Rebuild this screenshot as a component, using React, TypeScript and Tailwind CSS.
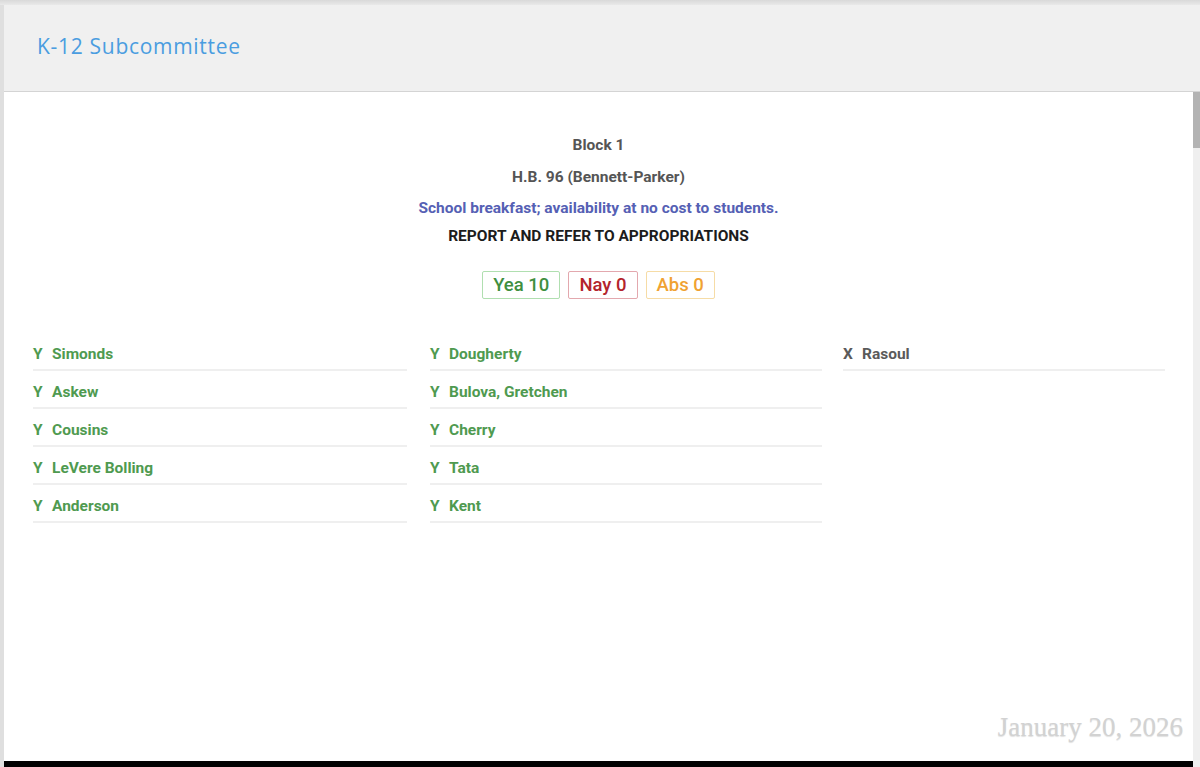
const col1 = ['Simonds', 'Askew', 'Cousins', 'LeVere Bolling', 'Anderson'];
const col2 = ['Dougherty', 'Bulova, Gretchen', 'Cherry', 'Tata', 'Kent'];

type Vote = { mark: string; name: string };

const VoteRow = ({ mark, name }: Vote) => {
	const color = mark === 'Y' ? 'text-[#4f9a50]' : 'text-[#5a5a5a]';
	return (
		<div className="mb-[2px] border-b-2 border-[#efefef] pt-[9px] pb-[5px]">
			<div className={`flex text-[15.5px] font-bold leading-[20px] ${color}`}>
				<span className="w-[19px]">{mark}</span>
				<span>{name}</span>
			</div>
		</div>
	);
};

export default function App() {
	return (
		<div className="flex h-[767px] w-[1200px] flex-col overflow-hidden bg-[#e4e4e4] font-['Roboto',sans-serif]">
			<div className="h-[5px] bg-gradient-to-b from-[#d9d9d9] to-[#e9e9e9]" />
			<div className="flex flex-1">
				<div className="w-[4px] bg-[#dfdfdf]" />
				<div className="flex flex-1 flex-col">
					<header className="flex h-[87px] items-center border-b border-[#d4d4d4] bg-[#f0f0f0] pl-[33px] pb-[2px]">
						<h1 className="font-['Open_Sans',sans-serif] text-[21px] tracking-[0.7px] text-[#4a9de0]">
							K-12 Subcommittee
						</h1>
					</header>
					<div className="flex flex-1">
						<div className="flex flex-1 flex-col bg-white">
							<main className="flex-1 pt-[37px]">
								<div className="flex flex-col items-center text-center">
									<div className="text-[15.5px] font-bold leading-[32px] text-[#555]">Block 1</div>
									<div className="text-[15.5px] font-bold leading-[32px] text-[#555]">
										H.B. 96 (Bennett-Parker)
									</div>
									<div className="text-[15.5px] font-bold leading-[31px] text-[#5560b4]">
										School breakfast; availability at no cost to students.
									</div>
									<div className="text-[15.5px] font-bold leading-[24px] text-[#1c1c1c]">
										REPORT AND REFER TO APPROPRIATIONS
									</div>
									<div className="mt-[23px] flex gap-[8px] text-[18.5px] font-medium leading-[26px]">
										<span className="rounded-[2px] border border-[#b0dfb0] px-[10px] text-[#3f8f40]">
											Yea 10
										</span>
										<span className="rounded-[2px] border border-[#e3a8ae] px-[10px] text-[#b3242c]">
											Nay 0
										</span>
										<span className="rounded-[2px] border border-[#f6dca6] px-[10px] text-[#f0a232]">
											Abs 0
										</span>
									</div>
								</div>
								<div className="mt-[36px] flex pl-[29px]">
									<div className="w-[374px]">
										{col1.map((n) => (
											<VoteRow key={n} mark="Y" name={n} />
										))}
									</div>
									<div className="ml-[23px] w-[392px]">
										{col2.map((n) => (
											<VoteRow key={n} mark="Y" name={n} />
										))}
									</div>
									<div className="ml-[21px] w-[322px]">
										<VoteRow mark="X" name="Rasoul" />
									</div>
								</div>
							</main>
							<div className="flex justify-end pr-[10px] pb-[17px]">
								<span className="font-['Liberation_Serif',serif] text-[27px] leading-[34px] text-[#d2d2d2] [text-shadow:0_1px_1px_rgba(0,0,0,0.12)]">
									January 20, 2026
								</span>
							</div>
							<div className="h-[6px] bg-black" />
						</div>
						<div className="w-[7px] bg-[#efefef]">
							<div className="h-[56px] bg-[#b3b3b3]" />
						</div>
					</div>
				</div>
			</div>
		</div>
	);
}
